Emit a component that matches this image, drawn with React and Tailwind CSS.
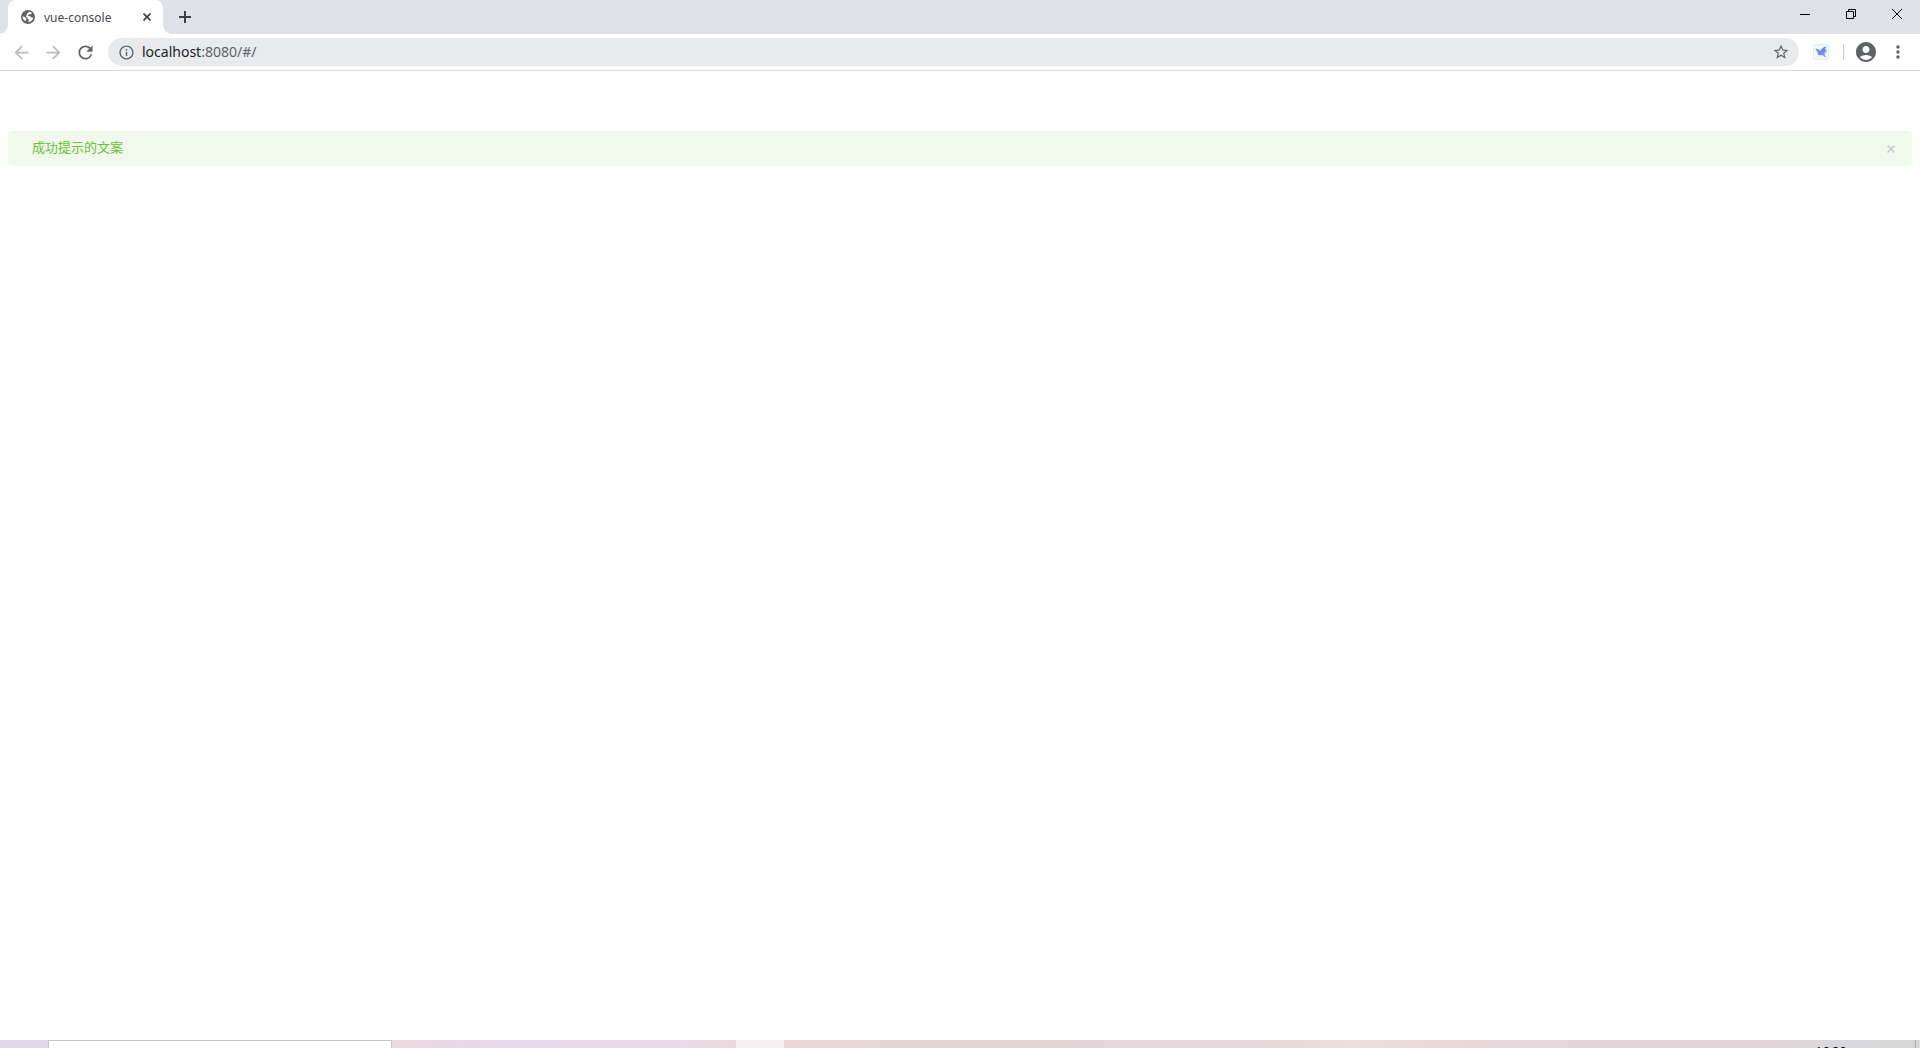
import { useState } from "react";
import {
  MdArrowBack,
  MdArrowForward,
  MdRefresh,
  MdInfoOutline,
  MdStarBorder,
  MdAccountCircle,
  MdMoreVert,
} from "react-icons/md";

const GlobeIcon = () => (
  <svg width="14" height="14" viewBox="0 0 14 14" aria-hidden="true">
    <circle cx="7" cy="7" r="7" fill="#5f6368" />
    <path
      d="M8.8 1.8c.9.3 1.600.8 2 1.400-.3.8-1 1-1.900 1.100-.8.1-1.200.6-1.700.8-.6.3-.5.8.2.9.900.2 2.100.1 2.500.9.4.7 1.300.9 2.500.7-.5 2.700-2.600 4.600-5.100 4.600-.2-1 .8-1.300.8-2.200-.1-.8-1.200-.8-1.300-1.600-.1-.7-.9-1-1.500-1.400-.5-.4-.2-1.200.2-1.600.5-.5.200-1.400.900-2.100.6-.6 1.700-.7 2.400-1.500zM1.600 6.500c1.300 0 2.400.4 3 1.200.4.6 1.200.8 1 1.600-.2.700-.9.900-.8 1.800C2.900 10.700 1.600 8.900 1.600 6.500z"
      fill="#fff"
    />
  </svg>
);

const BirdIcon = () => (
  <svg width="16" height="16" viewBox="0 0 16 16" aria-hidden="true">
    <defs>
      <linearGradient id="bird" x1="0" y1="0" x2="1" y2="1">
        <stop offset="0" stopColor="#4aa8f8" />
        <stop offset="0.5" stopColor="#6488fb" />
        <stop offset="1" stopColor="#c98cf7" />
      </linearGradient>
    </defs>
    <rect x="0.5" y="0.5" width="15" height="15" rx="1.5" fill="#f4f6fe" stroke="#e4e8fa" />
    <path
      d="M2.500 4.500c1.700.4 3.400 1 5 2.200C8.300 4.600 10.300 3 13.600 2.300c-.9 1-1.200 2-1.400 3.200L14.400 6.300l-2.200.9 1.700 1.400-2.600.2c.2 1.500.9 2.900 2.200 4.700-1.900-.7-3.200-1.500-4.100-2.600-1.900.8-4.100.3-5.400-1.400l2-.2C4.400 8.200 3.100 6.600 2.500 4.500z"
      fill="url(#bird)"
    />
  </svg>
);

const TabStrip = () => {
  return (
    <div className="flex h-[34px] bg-[#dee1e6]">
      {/* flared feet on both sides of the active tab */}
      <div className="h-2 w-2 self-end bg-[radial-gradient(circle_at_0_0,#dee1e6_7px,#fff_8px)]"></div>
      <div className="flex w-[155px] items-center rounded-t-lg bg-white pl-[13px] pr-[10px]">
        <GlobeIcon />
        <span className="ml-[9px] flex-1 pt-0.5 text-xs text-[#45494d]">vue-console</span>
        <button aria-label="Close tab" className="flex h-3 w-3 items-center justify-center">
          <svg width="8" height="8" viewBox="0 0 8 8" stroke="#3c4043" strokeWidth="1.7">
            <path d="M.5.5l7 7M7.5.5l-7 7" />
          </svg>
        </button>
      </div>
      <div className="h-2 w-2 self-end bg-[radial-gradient(circle_at_100%_0,#dee1e6_7px,#fff_8px)]"></div>
      <button aria-label="New tab" className="flex w-7 items-center justify-center">
        <svg width="12" height="12" viewBox="0 0 12 12" stroke="#3c4043" strokeWidth="2">
          <path d="M6 0v12M0 6h12" />
        </svg>
      </button>
      <div className="ml-auto flex h-7">
        <button aria-label="Minimize" className="flex w-[46px] items-center justify-center">
          <svg width="10" height="10" viewBox="0 0 10 10" stroke="#000">
            <path d="M0 5.5h10" />
          </svg>
        </button>
        <button aria-label="Restore" className="flex w-[46px] items-center justify-center">
          <svg width="10" height="10" viewBox="0 0 10 10" stroke="#000" fill="none">
            <path d="M.5 2.5h7v7h-7zM2.5 2.5v-2h7v7h-2" />
          </svg>
        </button>
        <button aria-label="Close" className="flex w-[46px] items-center justify-center">
          <svg width="10" height="10" viewBox="0 0 10 10" stroke="#000">
            <path d="M0 0l10 10M10 0L0 10" />
          </svg>
        </button>
      </div>
    </div>
  );
};

const Toolbar = () => {
  return (
    <div className="flex h-[37px] items-center border-b border-[#d9dbdd] bg-white pr-3 text-[#5f6368]">
      <div className="flex w-[108px] items-center gap-[11px] pl-[11px]">
        <button aria-label="Back" className="text-[#babcbe]">
          <MdArrowBack size={21} />
        </button>
        <button aria-label="Forward" className="text-[#babcbe]">
          <MdArrowForward size={21} />
        </button>
        <button aria-label="Reload">
          <MdRefresh size={21} />
        </button>
      </div>
      <div className="flex h-7 flex-1 items-center rounded-full bg-[#e9eaec] pl-[10px] pr-[9px]">
        <MdInfoOutline size={17} />
        {/* host is darker than the rest of the address */}
        <div className="ml-[7px] flex-1 text-sm">
          <span className="text-[#202124]">localhost</span>
          <span>:8080/#/</span>
        </div>
        <button aria-label="Bookmark this tab">
          <MdStarBorder size={18} />
        </button>
      </div>
      <button aria-label="Extension" className="ml-[14px]">
        <BirdIcon />
      </button>
      <div className="ml-[14px] h-4 w-px bg-[#c9cbce]"></div>
      <button aria-label="Profile" className="ml-[10px]">
        <MdAccountCircle size={24} />
      </button>
      <button aria-label="Menu" className="ml-[10px]">
        <MdMoreVert size={20} />
      </button>
    </div>
  );
};

const Alert = ({ title }) => {
  const [visible, setVisible] = useState(true);

  if (!visible) return null;

  return (
    <div
      role="alert"
      className="flex items-center rounded bg-[#f0f9eb] py-2 pl-6 pr-[17px] text-[#67c23a]"
    >
      <span className="flex-1 pb-0.5 text-[13px] leading-[17px]">{title}</span>
      <button aria-label="Close alert" onClick={() => setVisible(false)}>
        <svg width="8" height="8" viewBox="0 0 8 8" stroke="#c0c4cc" strokeWidth="1.2">
          <path d="M.5.5l7 7M7.5.5l-7 7" />
        </svg>
      </button>
    </div>
  );
};

const Taskbar = () => {
  return (
    <div className="flex h-2 overflow-hidden">
      <div className="w-12 bg-[#e1d8e8]"></div>
      <div className="w-[344px] border border-b-0 border-[#c6c6c8] bg-white"></div>
      <div className="w-[344px] bg-[linear-gradient(to_right,#eddae1,#ebd8e6_15%,#e5dbec_40%,#ebdae9_60%,#e8daea_72%,#ebdae9_85%,#edd9db)]"></div>
      <div className="w-12 bg-[#f6f0f0]"></div>
      <div className="flex flex-1 justify-end bg-[linear-gradient(to_right,#ecd6d4,#e5d6d5_10%,#e6d6d8_40%,#eddfda_50%,#ecd9d9_58%,#e4d5da_72%,#e5d5da_84%,#dbd6de_93%,#d8d6da)] pr-[69px]">
        <span className="pt-1 text-xs leading-4 text-black">16:26</span>
      </div>
      <div className="w-[5px] border-l border-[#a9a7ac] bg-[#d8d7da]"></div>
    </div>
  );
};

const App = () => {
  return (
    <div className="flex h-screen flex-col bg-white font-['Noto_Sans','Noto_Sans_CJK_SC',sans-serif]">
      <TabStrip />
      <Toolbar />
      <main className="flex-1 px-2 pt-[60px]">
        <Alert title="成功提示的文案" />
      </main>
      <Taskbar />
    </div>
  );
};

export default App;
